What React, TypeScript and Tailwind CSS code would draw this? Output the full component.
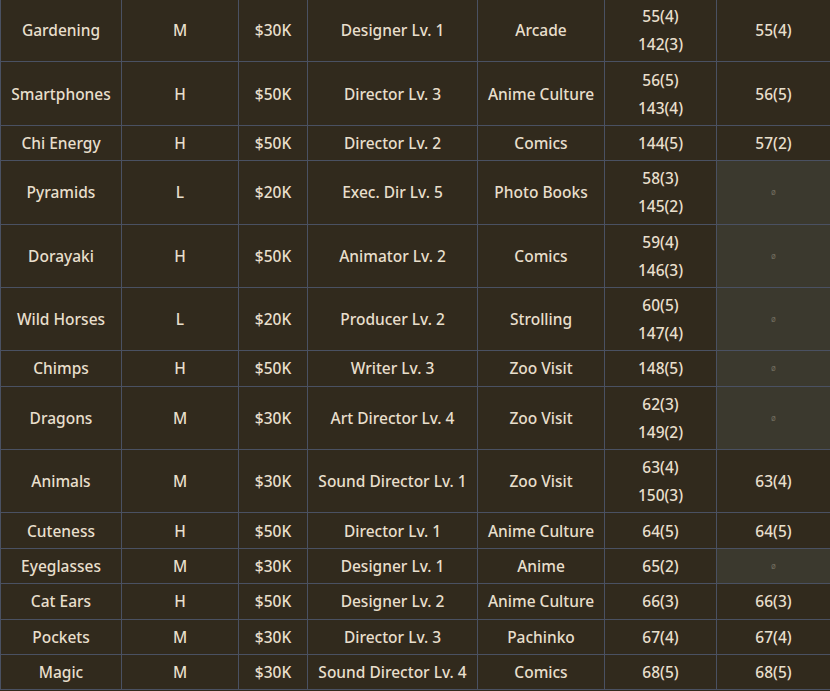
import React from "react";

type Row = {
  topic: string;
  tier: string;
  cost: string;
  staff: string;
  genre: string;
  ids: string[];
  pick: string | null;
};

const rows: Row[] = [
  { topic: "Gardening", tier: "M", cost: "$30K", staff: "Designer Lv. 1", genre: "Arcade", ids: ["55(4)", "142(3)"], pick: "55(4)" },
  { topic: "Smartphones", tier: "H", cost: "$50K", staff: "Director Lv. 3", genre: "Anime Culture", ids: ["56(5)", "143(4)"], pick: "56(5)" },
  { topic: "Chi Energy", tier: "H", cost: "$50K", staff: "Director Lv. 2", genre: "Comics", ids: ["144(5)"], pick: "57(2)" },
  { topic: "Pyramids", tier: "L", cost: "$20K", staff: "Exec. Dir Lv. 5", genre: "Photo Books", ids: ["58(3)", "145(2)"], pick: null },
  { topic: "Dorayaki", tier: "H", cost: "$50K", staff: "Animator Lv. 2", genre: "Comics", ids: ["59(4)", "146(3)"], pick: null },
  { topic: "Wild Horses", tier: "L", cost: "$20K", staff: "Producer Lv. 2", genre: "Strolling", ids: ["60(5)", "147(4)"], pick: null },
  { topic: "Chimps", tier: "H", cost: "$50K", staff: "Writer Lv. 3", genre: "Zoo Visit", ids: ["148(5)"], pick: null },
  { topic: "Dragons", tier: "M", cost: "$30K", staff: "Art Director Lv. 4", genre: "Zoo Visit", ids: ["62(3)", "149(2)"], pick: null },
  { topic: "Animals", tier: "M", cost: "$30K", staff: "Sound Director Lv. 1", genre: "Zoo Visit", ids: ["63(4)", "150(3)"], pick: "63(4)" },
  { topic: "Cuteness", tier: "H", cost: "$50K", staff: "Director Lv. 1", genre: "Anime Culture", ids: ["64(5)"], pick: "64(5)" },
  { topic: "Eyeglasses", tier: "M", cost: "$30K", staff: "Designer Lv. 1", genre: "Anime", ids: ["65(2)"], pick: null },
  { topic: "Cat Ears", tier: "H", cost: "$50K", staff: "Designer Lv. 2", genre: "Anime Culture", ids: ["66(3)"], pick: "66(3)" },
  { topic: "Pockets", tier: "M", cost: "$30K", staff: "Director Lv. 3", genre: "Pachinko", ids: ["67(4)"], pick: "67(4)" },
  { topic: "Magic", tier: "M", cost: "$30K", staff: "Sound Director Lv. 4", genre: "Comics", ids: ["68(5)"], pick: "68(5)" },
];

const cell = "border border-[#4a5162] px-1 py-[3.2px] text-center align-middle";

export default function App() {
  return (
    <div className="h-[691px] overflow-hidden bg-[#312a1d] text-[15.5px] font-medium leading-[28px] text-[#e8dfcc]" style={{ fontFamily: '"Noto Sans", sans-serif' }}>
      <table className="-mt-[2px] w-[830px] table-fixed border-collapse">
        <colgroup>
          <col className="w-[121px]" />
          <col className="w-[117px]" />
          <col className="w-[69px]" />
          <col className="w-[170px]" />
          <col className="w-[127px]" />
          <col className="w-[112px]" />
          <col className="w-[114px]" />
        </colgroup>
        <tbody>
          {rows.map((r) => (
            <tr key={r.topic}>
              <td className={cell}>{r.topic}</td>
              <td className={cell}>{r.tier}</td>
              <td className={cell}>{r.cost}</td>
              <td className={cell}>{r.staff}</td>
              <td className={cell}>{r.genre}</td>
              <td className={cell}>
                {r.ids.map((id) => (
                  <div key={id}>{id}</div>
                ))}
              </td>
              {r.pick ? (
                <td className={cell}>{r.pick}</td>
              ) : (
                <td className={cell + " bg-[#3b392e] text-[8px] font-normal text-[#6f6b5d]"}>ø</td>
              )}
            </tr>
          ))}
        </tbody>
      </table>
    </div>
  );
}
